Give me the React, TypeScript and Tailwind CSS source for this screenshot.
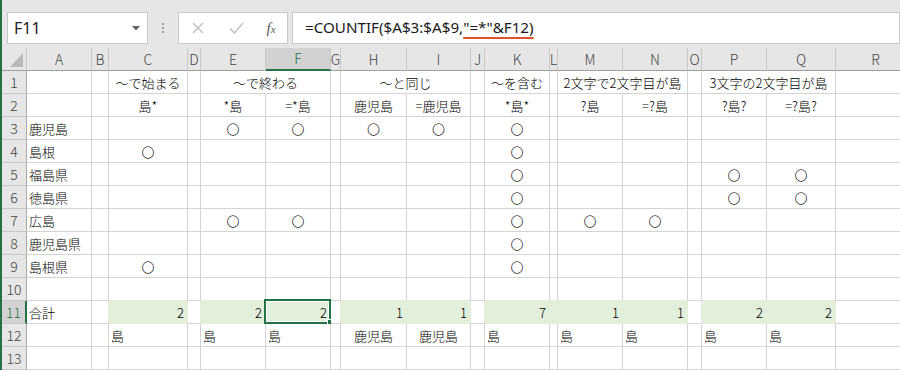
import React from 'react';

type Align = 'l' | 'c' | 'r';
type CellDef = { t: string; a: Align; span?: number };

const COLS = ['A', 'B', 'C', 'D', 'E', 'F', 'G', 'H', 'I', 'J', 'K', 'L', 'M', 'N', 'O', 'P', 'Q', 'R'];
const O = '〇';

const c = (t: string, span?: number): CellDef => ({ t, a: 'c', span });
const l = (t: string): CellDef => ({ t, a: 'l' });
const r = (t: string): CellDef => ({ t, a: 'r' });

const ROWS: Record<number, Record<string, CellDef>> = {
  1: { C: c('～で始まる'), E: c('～で終わる', 2), H: c('～と同じ', 2), K: c('～を含む'), M: c('2文字で2文字目が島', 2), P: c('3文字の2文字目が島', 2) },
  2: { C: c('島*'), E: c('*島'), F: c('=*島'), H: c('鹿児島'), I: c('=鹿児島'), K: c('*島*'), M: c('?島'), N: c('=?島'), P: c('?島?'), Q: c('=?島?') },
  3: { A: l('鹿児島'), E: c(O), F: c(O), H: c(O), I: c(O), K: c(O) },
  4: { A: l('島根'), C: c(O), K: c(O) },
  5: { A: l('福島県'), K: c(O), P: c(O), Q: c(O) },
  6: { A: l('徳島県'), K: c(O), P: c(O), Q: c(O) },
  7: { A: l('広島'), E: c(O), F: c(O), K: c(O), M: c(O), N: c(O) },
  8: { A: l('鹿児島県'), K: c(O) },
  9: { A: l('島根県'), C: c(O), K: c(O) },
  10: {},
  11: { A: l('合計'), C: r('2'), E: r('2'), F: r('2'), H: r('1'), I: r('1'), K: r('7'), M: r('1'), N: r('1'), P: r('2'), Q: r('2') },
  12: { C: l('島'), E: l('島'), F: l('島'), H: c('鹿児島'), I: c('鹿児島'), K: l('島'), M: l('島'), N: l('島'), P: l('島'), Q: l('島') },
  13: {},
};

const FILLED = new Set(['C', 'E', 'F', 'H', 'I', 'K', 'L', 'M', 'N', 'P', 'Q']);

function isFilled(row: number, col: string) {
  return row === 11 && FILLED.has(col);
}

function Cell({ row, colIdx, def }: { row: number; colIdx: number; def?: CellDef }) {
  const col = COLS[colIdx];
  const span = def?.span ?? 1;
  const nextCol = COLS[colIdx + span];
  const filled = isFilled(row, col);
  const rightFill = filled || (nextCol ? isFilled(row, nextCol) : false);
  const bottomFill = filled || isFilled(row + 1, col);
  const selected = row === 11 && col === 'F';
  const align = def?.a ?? 'l';

  return (
    <div
      className={[
        'relative h-[23px] border-r border-b flex items-center whitespace-nowrap text-[13px] font-light text-black',
        span === 2 ? 'col-span-2' : '',
        rightFill ? 'border-r-[#e2efda]' : 'border-r-[#d4d4d4]',
        bottomFill ? 'border-b-[#e2efda]' : 'border-b-[#d4d4d4]',
        filled ? 'bg-[#e2efda]' : 'bg-white',
        align === 'l' ? 'justify-start pl-[2px]' : align === 'c' ? 'justify-center' : 'justify-end pr-[3px]',
      ].join(' ')}
    >
      {def ? <span className="leading-none">{def.t}</span> : null}
      {selected ? (
        <>
          <div className="absolute -left-[2px] -top-[2px] -right-[1px] -bottom-[1px] border-2 border-[#217346]">
            <div className="w-full h-full border border-white" />
          </div>
          <div className="absolute -right-[4px] -bottom-[3px] w-[7px] h-[7px] bg-[#217346] border border-white" />
        </>
      ) : null}
    </div>
  );
}

function RowCells({ row }: { row: number }) {
  const defs = ROWS[row] ?? {};
  const out: React.ReactNode[] = [];
  const selRow = row === 11;
  out.push(
    <div
      key="h"
      className={[
        'h-[23px] flex items-center justify-center text-[14px] font-light border-b border-b-[#c8c8c8]',
        selRow
          ? 'bg-[#d2d2d2] text-[#217346] border-r-2 border-r-[#217346]'
          : 'bg-[#e6e6e6] text-[#444] border-r border-r-[#aaaaaa]',
      ].join(' ')}
    >
      {row}
    </div>
  );
  let i = 0;
  while (i < COLS.length) {
    const def = defs[COLS[i]];
    out.push(<Cell key={COLS[i]} row={row} colIdx={i} def={def} />);
    i += def?.span ?? 1;
  }
  return <>{out}</>;
}

function HeaderRow() {
  return (
    <>
      <div className="h-[23px] bg-[#e6e6e6] border-r border-r-[#c8c8c8] border-b border-b-[#9e9e9e] flex items-end justify-end pr-[3px] pb-[3px]">
        <svg width="13" height="14" viewBox="0 0 13 14">
          <polygon points="13,0 13,14 0,14" fill="#b9b9b9" />
        </svg>
      </div>
      {COLS.map((col) => {
        const sel = col === 'F';
        return (
          <div
            key={col}
            className={[
              'h-[23px] flex items-center justify-center text-[14px] font-light',
              sel
                ? 'bg-[#d2d2d2] text-[#217346] border-r border-r-[#c8c8c8] border-b-2 border-b-[#217346]'
                : 'bg-[#e6e6e6] text-[#444] border-r border-r-[#c8c8c8] border-b border-b-[#9e9e9e]',
            ].join(' ')}
          >
            {col}
          </div>
        );
      })}
    </>
  );
}

function FormulaBar() {
  return (
    <div className="h-[52px] flex items-start pt-[12px] pl-[5px]">
      <div className="w-[141px] h-[32px] shrink-0 bg-white border border-[#c8c8c8] flex items-center justify-between pl-[6px] pr-[7px]">
        <span className="text-[16px] text-[#222] font-['Noto_Sans',sans-serif] leading-none">F11</span>
        <svg width="8" height="5" viewBox="0 0 8 5">
          <polygon points="0,0 8,0 4,4.5" fill="#666" />
        </svg>
      </div>
      <div className="w-[30px] h-[32px] shrink-0 flex flex-col items-center justify-center gap-[2px]">
        <div className="w-[2px] h-[2px] bg-[#9a9a9a]" />
        <div className="w-[2px] h-[2px] bg-[#9a9a9a]" />
        <div className="w-[2px] h-[2px] bg-[#9a9a9a]" />
      </div>
      <div className="w-[110px] h-[32px] shrink-0 bg-white border border-[#c8c8c8] flex items-center">
        <div className="w-[38px] flex justify-center">
          <svg width="12" height="12" viewBox="0 0 12 12">
            <path d="M1 1 L11 11 M11 1 L1 11" stroke="#bdbdbd" strokeWidth="1.3" fill="none" />
          </svg>
        </div>
        <div className="w-[38px] flex justify-center">
          <svg width="15" height="12" viewBox="0 0 15 12">
            <path d="M1 6.5 L5.5 11 L14 1" stroke="#bdbdbd" strokeWidth="1.3" fill="none" />
          </svg>
        </div>
        <div className="w-[32px] flex justify-center">
          <span className="font-['Liberation_Serif',serif] italic text-[#555] text-[15px] leading-none">
            f<span className="text-[11px]">x</span>
          </span>
        </div>
      </div>
      <div className="flex-1 ml-[4px] h-[32px] bg-white border border-[#c8c8c8] flex items-center pl-[12px]">
        <span className="text-[15.2px] text-[#1a1a1a] font-['Noto_Sans',sans-serif] whitespace-nowrap leading-none">
          =COUNTIF($A$3:$A$9,
          <span className="underline decoration-[#e0532a] decoration-2 underline-offset-[4px]">"=*"&amp;F12)</span>
        </span>
      </div>
    </div>
  );
}

export default function App() {
  const rowNums = Array.from({ length: 13 }, (_, i) => i + 1);
  return (
    <div className="w-[900px] h-[370px] overflow-hidden flex bg-[#e6e6e6] font-['Noto_Sans_CJK_JP',sans-serif]">
      <div className="w-[2px] shrink-0 bg-[#217346]" />
      <div className="flex-1 min-w-0 flex flex-col overflow-hidden">
        <FormulaBar />
        <div className="grid w-max grid-cols-[25px_65px_17px_79px_13px_65px_65px_10px_66px_64px_14px_65px_8px_65px_65px_14px_65px_69px_80px]">
          <HeaderRow />
          {rowNums.map((rn) => (
            <RowCells key={rn} row={rn} />
          ))}
        </div>
      </div>
    </div>
  );
}
